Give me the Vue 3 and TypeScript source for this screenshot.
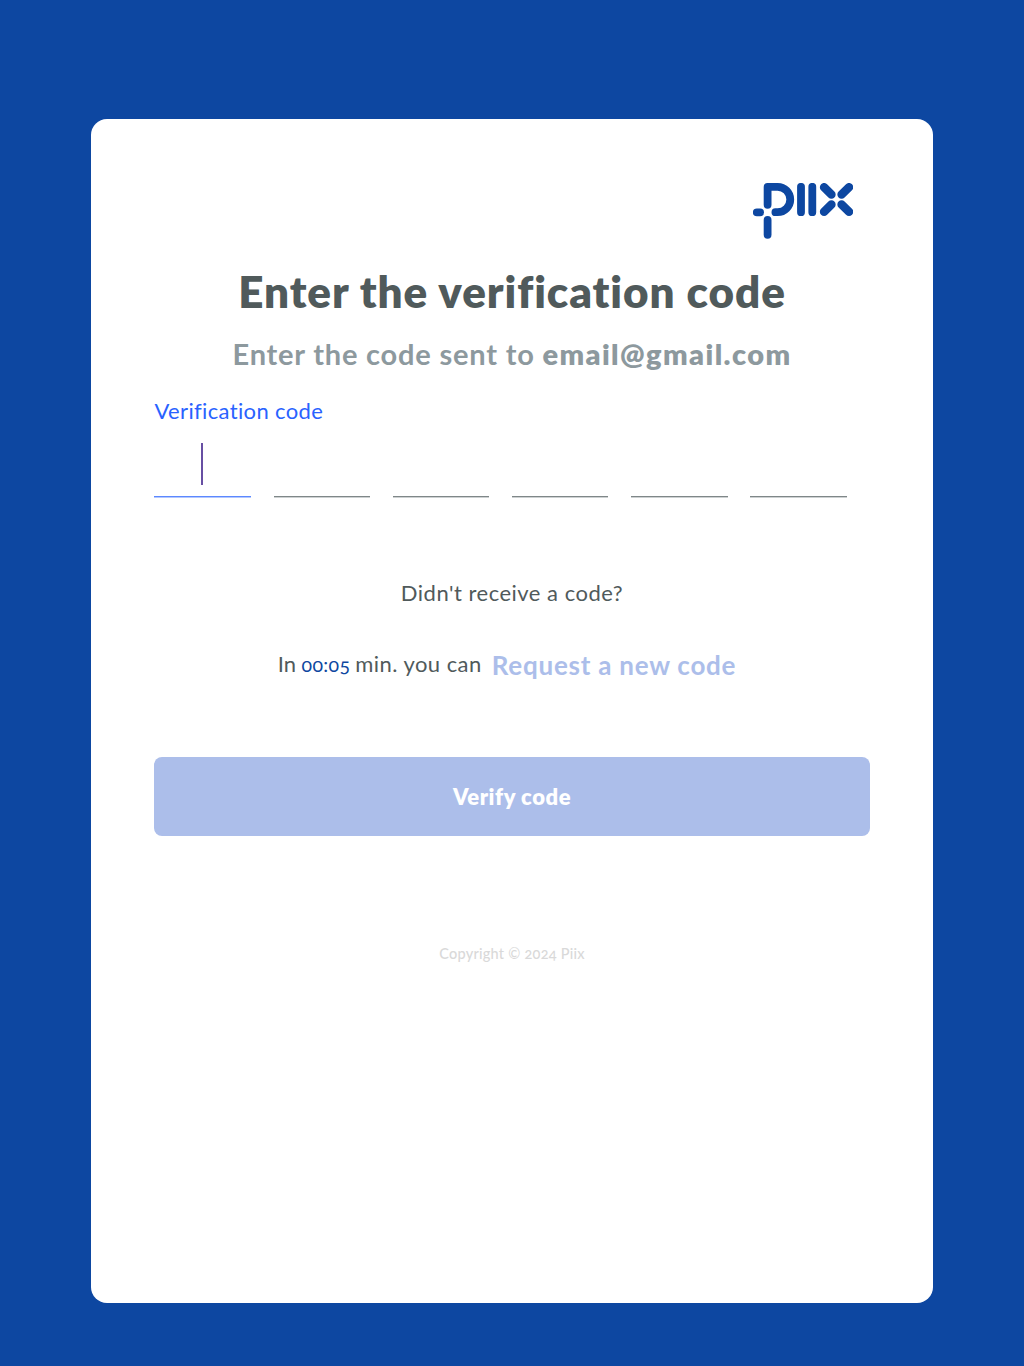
<script setup lang="ts">
import { ref } from 'vue'

const email = 'email@gmail.com'
const digits = ref<string[]>(['', '', '', '', '', ''])
const activeIndex = ref(0)
const remaining = '00:05'
</script>

<template>
  <div class="screen">
    <main class="card">
      <header class="brand">
        <svg class="logo" viewBox="0 0 100 56" role="img" aria-label="Piix">
          <path d="M14.6 21.8V3.9H24.6a12.6 12.6 0 0 1 0 25.3H22.4" />
          <path d="M3.8 29.3H7.1" />
          <path d="M14.6 37V51.8" />
          <path d="M48 3.8V29.2M59.3 3.8V29.2" />
          <path class="cross" d="M71.1 4.2 78.4 11.5M96 4.2 88.6 11.5M78.4 21.5 71.1 28.8M88.6 21.5 96 28.8" />
        </svg>
      </header>

      <h1>Enter the verification code</h1>
      <p class="subtitle"><span>Enter the code sent to </span><strong>{{ email }}</strong></p>

      <span class="label">Verification code</span>
      <div class="code">
        <div v-for="(digit, i) in digits" :key="i" class="slot" :class="{ active: i === activeIndex }">
          <span v-if="i === activeIndex" class="caret"></span>{{ digit }}
        </div>
      </div>

      <p class="question">Didn't receive a code?</p>
      <div class="resend">
        <div class="countdown">
          <span class="in">In</span>
          <span class="timer">{{ remaining }}</span>
          <span class="wait">min. you can</span>
        </div>
        <button class="link" type="button" disabled>Request a new code</button>
      </div>

      <button class="verify" type="button" disabled>Verify code</button>
      <footer>Copyright © 2024 Piix</footer>
    </main>
  </div>
</template>

<style>
body {
  background: #0d47a1;
}
</style>

<style scoped>
.screen {
  box-sizing: border-box;
  min-height: 1366px;
  padding: 119px 91px 63px;
  background: #0d47a1;
  font-family: Lato, 'Open Sans', sans-serif;
  font-variant-numeric: oldstyle-nums;
}

.card {
  box-sizing: border-box;
  display: flex;
  flex-direction: column;
  height: 1184px;
  padding: 64px 63px 0;
  background: #fff;
  border-radius: 16px;
  color: #505a5b;
}

h1,
p {
  margin: 0;
  text-align: center;
  white-space: pre;
}

button {
  padding: 0;
  border: 0;
  background: none;
  font-family: inherit;
}

.brand {
  display: flex;
  justify-content: flex-end;
  padding-right: 17px;
}

.logo {
  width: 100px;
  height: 56px;
  overflow: hidden;
  fill: none;
  stroke: #0d47a1;
  stroke-width: 7.8;
  stroke-linecap: round;
  stroke-linejoin: round;
}

.logo .cross {
  stroke-width: 8.5;
}

h1 {
  margin-top: 25px;
  font-size: 44px;
  line-height: 54px;
  font-weight: 800;
  letter-spacing: 0.92px;
}

.subtitle {
  margin-top: 18px;
  font-size: 29px;
  line-height: 36px;
  font-weight: 700;
  letter-spacing: 0.8px;
  color: #8d999e;
}

.subtitle strong {
  font-weight: 800;
  letter-spacing: 1.4px;
}

.label {
  margin-top: 25px;
  padding-left: 0.5px;
  font-size: 22px;
  line-height: 28px;
  letter-spacing: 0.35px;
  color: #2962ff;
}

.code {
  display: grid;
  grid-template-columns: repeat(6, 96.5px);
  column-gap: 22.7px;
  margin: 18px 0 0 0.4px;
}

.slot {
  display: flex;
  justify-content: center;
  height: 53px;
  border-bottom: 1px solid #7f8788;
  box-shadow: 0 1px 0 #cdd1d2;
}

.slot.active {
  border-bottom-color: #5c88ff;
  box-shadow: 0 1px 0 #b3c8ff;
}

.caret {
  width: 2px;
  height: 42px;
  margin-right: 1px;
  background: #674fa3;
}

.question {
  margin-top: 82px;
  font-size: 22px;
  line-height: 28px;
  letter-spacing: 0.5px;
}

.resend {
  display: flex;
  align-items: flex-start;
  justify-content: center;
  height: 34px;
  margin-top: 42px;
  padding-right: 10px;
  font-size: 22px;
  line-height: 30px;
}

.countdown {
  display: flex;
  align-items: baseline;
  margin-right: 10px;
}

.in {
  margin-right: 5.5px;
}

.timer {
  margin-right: 5px;
  font-size: 19.5px;
  letter-spacing: 0.35px;
  color: #0d47a1;
}

.wait {
  letter-spacing: 0.45px;
}

.link {
  font-size: 26px;
  line-height: 32px;
  font-weight: 700;
  letter-spacing: 0.76px;
  color: #acbeea;
}

.verify {
  height: 79px;
  margin-top: 74px;
  border-radius: 8px;
  background: #acbeea;
  color: #fff;
  font-size: 22px;
  font-weight: 800;
  letter-spacing: 0.55px;
}

footer {
  margin-top: 108px;
  font-size: 14.5px;
  line-height: 20px;
  font-weight: 500;
  letter-spacing: 0.25px;
  text-align: center;
  color: #d9d9d9;
}
</style>
